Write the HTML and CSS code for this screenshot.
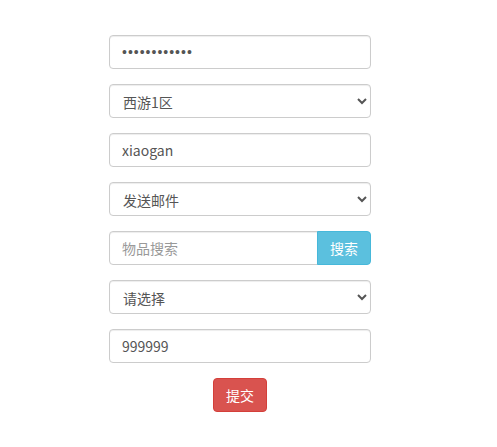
FILE: index.html
```html
<!DOCTYPE html>
<html lang="zh">
<head>
<meta charset="utf-8">
<link rel="stylesheet" href="styles.css">
</head>
<body>
<form class="form">
  <input class="control control-password" type="password" value="123456789012">
  <select class="control">
    <option>西游1区</option>
  </select>
  <input class="control" type="text" value="xiaogan">
  <select class="control">
    <option>发送邮件</option>
  </select>
  <div class="group">
    <input class="control group-input" type="text" placeholder="物品搜索">
    <button class="btn btn-info" type="button">搜索</button>
  </div>
  <select class="control">
    <option>请选择</option>
  </select>
  <input class="control" type="text" value="999999">
  <div class="actions">
    <button class="btn btn-danger" type="button">提交</button>
  </div>
</form>
</body>
</html>
```
FILE: styles.css
```css
* { box-sizing: border-box; }
html, body { margin: 0; background: #fff; }
body {
  font-family: "Microsoft YaHei", "Noto Sans CJK SC", "Noto Sans", sans-serif;
  font-size: 14px;
  color: #555;
}
.form {
  width: 262px;
  margin: 35px 0 0 109px;
  display: flex;
  flex-direction: column;
  gap: 15px;
}
.control {
  display: block;
  width: 100%;
  height: 34px;
  padding: 6px 12px;
  font: inherit;
  font-size: 14px;
  color: #555;
  background: #fff;
  border: 1px solid #ccc;
  border-radius: 4px;
  box-shadow: inset 0 1px 1px rgba(0,0,0,.075);
  outline: none;
}
.control-password {
  font-family: "Liberation Sans", Arial, sans-serif;
  letter-spacing: 1px;
}
.control::placeholder { color: #999; }
select.control { padding: 6px 9px; }
.group { display: flex; }
.group-input {
  flex: 1;
  border-radius: 4px 0 0 4px;
}
.btn {
  height: 34px;
  padding: 6px 12px;
  font: inherit;
  font-size: 14px;
  color: #fff;
  border: 1px solid transparent;
  border-radius: 4px;
  cursor: pointer;
}
.btn-info {
  width: 54px;
  background: #5bc0de;
  border-color: #46b8da;
  border-radius: 0 4px 4px 0;
  margin-left: -1px;
}
.btn-danger {
  width: 54px;
  background: #d9534f;
  border-color: #d43f3a;
}
.actions { display: flex; justify-content: center; }
```
